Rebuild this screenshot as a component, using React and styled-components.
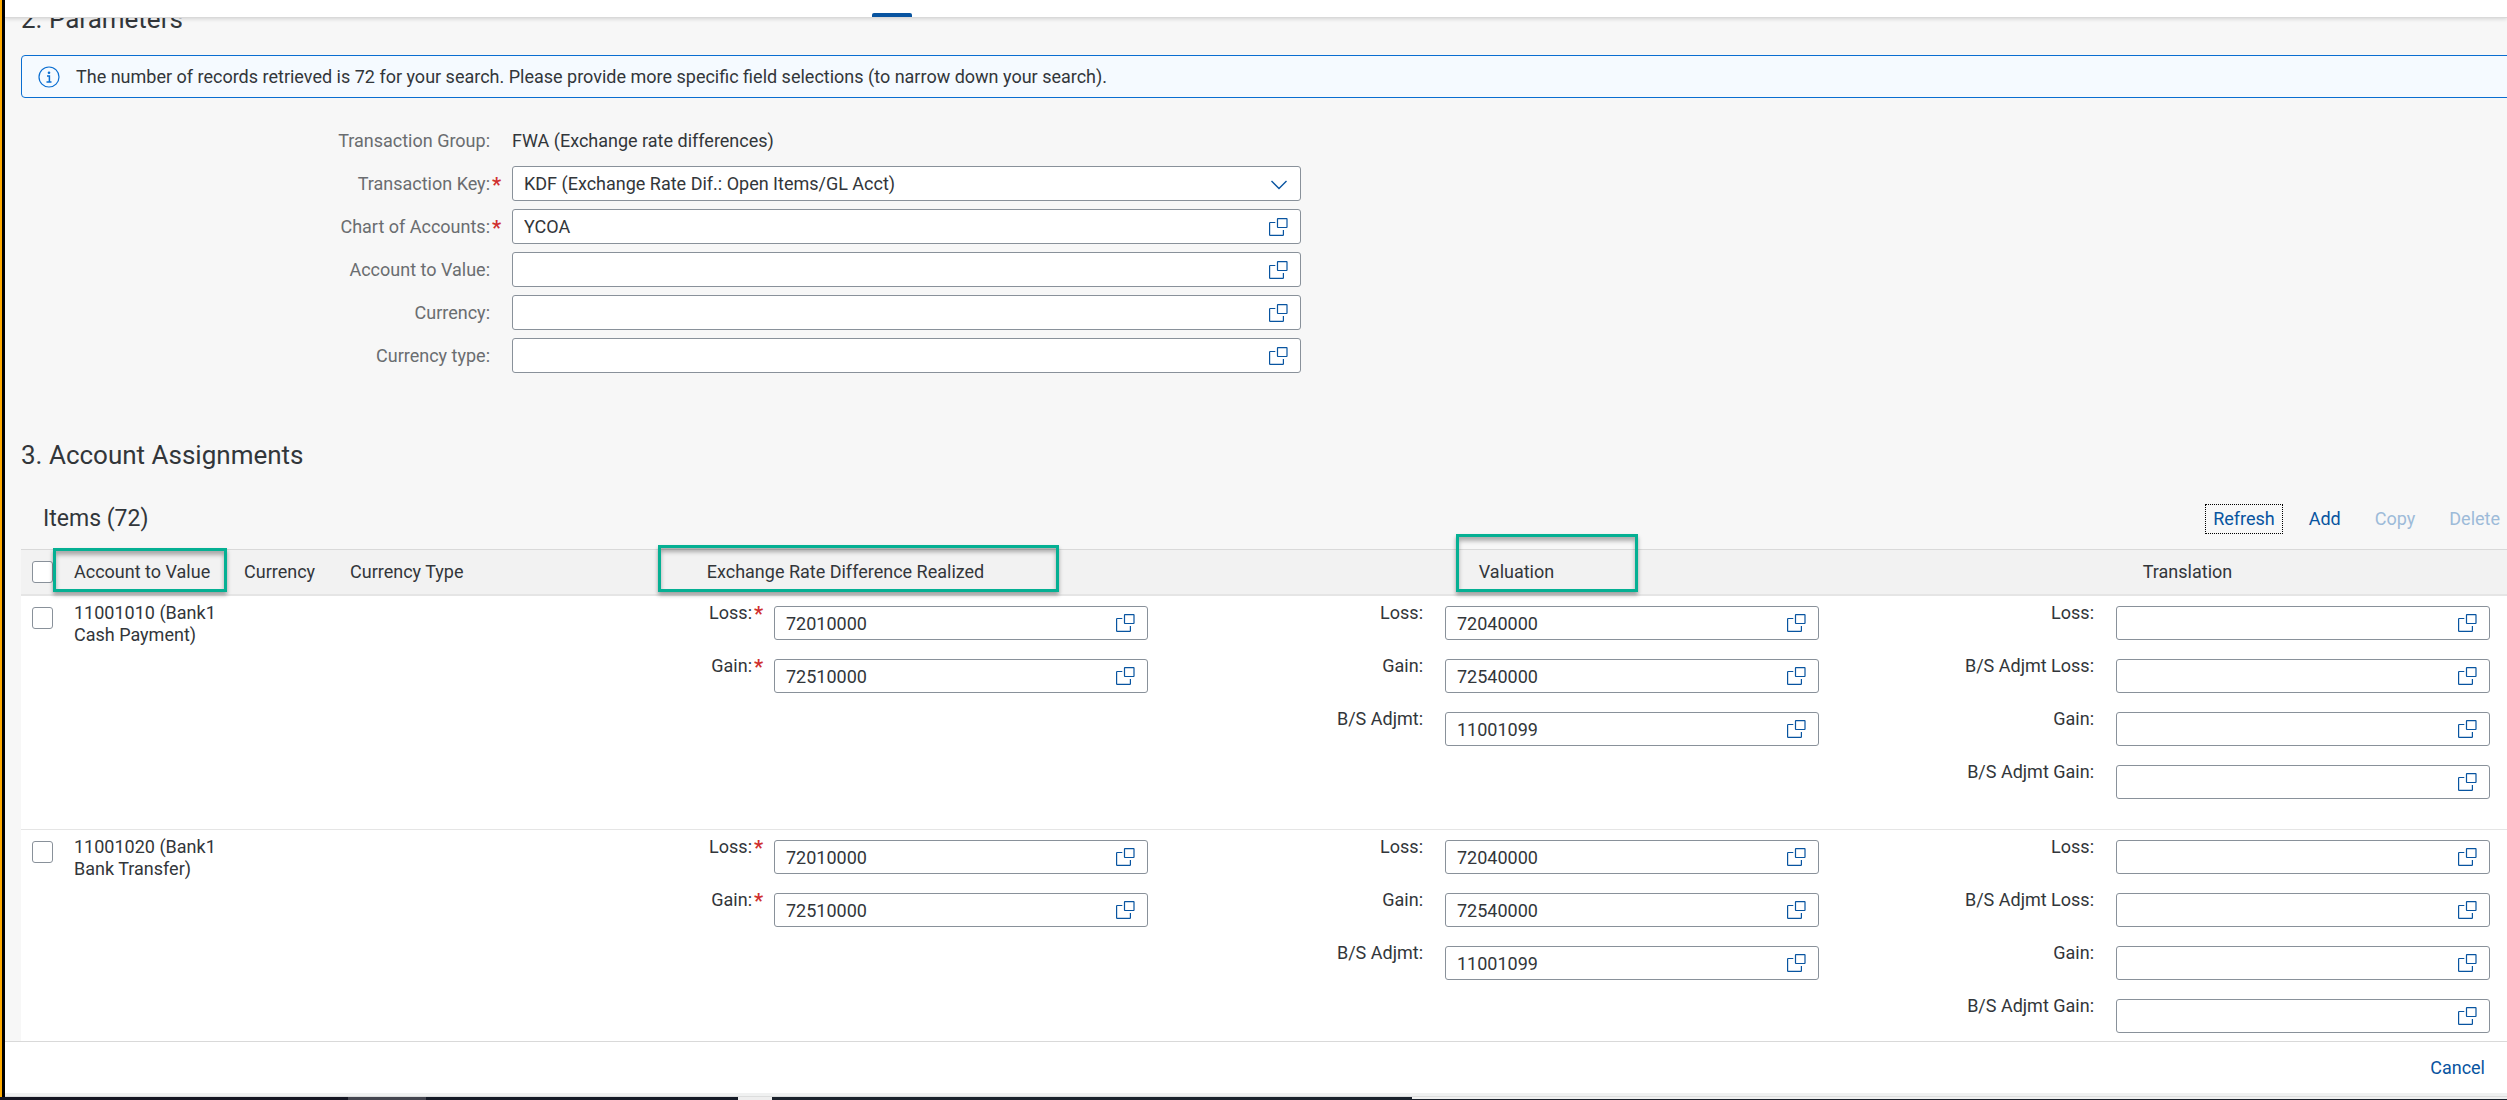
import React, { useId } from "react";
import styled, { createGlobalStyle } from "styled-components";

const color = {
  text: "#32363a",
  label: "#6a6d70",
  link: "#0854a0",
  border: "#89919a",
  line: "#d9d9d9",
  required: "#d0302f",
  mark: "#05b093",
};

const GlobalStyle = createGlobalStyle`
  *, *::before, *::after { box-sizing: border-box; }
  body { margin: 0; overflow: hidden; }
  body, button, input, select {
    font-family: Roboto, "Liberation Sans", sans-serif;
    font-size: 18px;
    line-height: 22px;
    color: ${color.text};
  }
`;

const Page = styled.div`
  display: flex;
  flex-direction: column;
  height: 100vh;
  overflow: hidden;
  background: #f7f7f7;
`;

const Window = styled.div`
  flex: 1;
  min-height: 0;
  display: flex;
  flex-direction: column;
  border-left: 3px solid #000;
  box-shadow: -2px 0 0 #ffab00;
  margin-left: 2px;
`;

const TabBar = styled.header`
  flex: none;
  display: flex;
  align-items: flex-end;
  height: 18px;
  padding-left: 867px;
  background: #fff;
  border-bottom: 1px solid ${color.line};
  box-shadow: 0 1px 4px rgba(0, 0, 0, 0.15);
  z-index: 1;
`;

const ActiveTab = styled.div`
  width: 40px;
  height: 4px;
  border-radius: 2px 2px 0 0;
  background: ${color.link};
`;

const Content = styled.main`
  flex: 1;
  min-height: 0;
  overflow: hidden;
`;

const Scrolled = styled.div`
  width: 100%;
  margin: -15px 0 0 16px;
`;

const SectionTitle = styled.h2`
  margin: 0;
  font-size: 26px;
  font-weight: 400;
  line-height: 32px;
`;

const MessageStrip = styled.div`
  display: flex;
  align-items: center;
  gap: 16px;
  height: 43px;
  margin-top: 20px;
  padding-left: 16px;
  border: 1px solid #0a6ed1;
  border-radius: 4px;
  background: #f5faff;
`;

const Form = styled.form`
  display: grid;
  grid-template-columns: 491fr 789fr 1222fr;
  grid-auto-rows: 35px;
  row-gap: 8px;
  margin: 25px 0 66px;
`;

const FormRow = styled.div`
  grid-column: 1 / 3;
  display: grid;
  grid-template-columns: subgrid;
  align-items: center;
`;

const Label = styled.label`
  display: flex;
  justify-content: flex-end;
  white-space: nowrap;
  color: ${(p) => (p.$muted ? color.label : color.text)};

  &::after {
    content: "${(p) => (p.$required ? "*" : "")}";
    width: 22px;
    padding: 3px 0 0 2px;
    font-size: 20px;
    font-weight: 700;
    line-height: 19px;
    color: ${color.required};
  }
`;

const Control = styled.div`
  display: flex;
  align-items: center;
  height: ${(p) => p.$height}px;
  padding-right: 12px;
  border: 1px solid ${color.border};
  border-radius: 3px;
  background: #fff;
`;

const TextInput = styled.input`
  flex: 1;
  min-width: 0;
  height: 100%;
  padding: 0 11px;
  border: 0;
  outline: 0;
  background: transparent;
`;

const KeySelect = styled.select`
  flex: 1;
  min-width: 0;
  height: 100%;
  padding: 0 11px;
  border: 0;
  outline: 0;
  appearance: none;
  background: transparent;
`;

const IconButton = styled.button`
  display: flex;
  padding: 0;
  border: 0;
  background: transparent;
  color: ${color.link};
`;

const Toolbar = styled.div`
  display: flex;
  align-items: center;
  height: 60px;
  margin-top: 18px;
  padding: 0 15px 0 22px;
`;

const TableTitle = styled.h3`
  flex: 1;
  margin: 0;
  font-size: 23px;
  font-weight: 400;
  line-height: 28px;
`;

const Actions = styled.div`
  display: flex;
  gap: 18px;
`;

const TextButton = styled.button`
  height: 30px;
  padding: 0 7px;
  border: 1px dotted ${(p) => (p.$focused ? "#000" : "transparent")};
  background: transparent;
  color: ${color.link};

  &:disabled {
    color: #9dbbd9;
  }
`;

const Table = styled.table`
  width: 100%;
  table-layout: fixed;
  border-collapse: separate;
  border-spacing: 0;
  border-top: 1px solid ${color.line};
  background: #fff;
`;

const HeadCell = styled.th`
  height: 46px;
  padding: 0;
  border-bottom: 2px solid #e5e5e5;
  background: #f2f2f2;
  font-weight: 400;
  text-align: ${(p) => (p.$center ? "center" : "left")};
`;

const Marked = styled.span`
  position: relative;
`;

const Mark = styled.span`
  position: absolute;
  top: ${(p) => p.$top}px;
  bottom: -10px;
  left: ${(p) => p.$left}px;
  right: ${(p) => p.$right}px;
  border: 3px solid ${color.mark};
  box-shadow: 0 3px 4px rgba(0, 0, 0, 0.35), inset 0 4px 4px rgba(0, 0, 0, 0.3);
`;

const Cell = styled.td`
  height: 234px;
  padding: 6px 0 0;
  border-bottom: 1px solid #e5e5e5;
  vertical-align: top;
`;

const Account = styled.div`
  width: 152px;
`;

const CheckBox = styled.input`
  display: block;
  appearance: none;
  width: 21px;
  height: 22px;
  margin: ${(p) => (p.$row ? 5 : 0)}px 0 0 11px;
  border: 1px solid ${color.border};
  border-radius: 3px;
  background: #fff;
`;

const Field = styled.div`
  display: grid;
  grid-template-columns: 264fr 374fr 33fr;
  height: 53px;

  & > div {
    margin-top: 4px;
  }
`;

const Footer = styled.footer`
  flex: none;
  display: flex;
  align-items: center;
  justify-content: flex-end;
  height: 52px;
  padding-right: 14px;
  border-top: 1px solid ${color.line};
  background: #fff;
`;

const WindowEdge = styled.div`
  flex: none;
  height: 4px;
  background: #f0f1f1;
  border-bottom: 1px solid #dcdddd;
`;

const TaskBar = styled.div`
  flex: none;
  display: flex;
  height: 3px;
`;

const TaskSegment = styled.div`
  flex: ${(p) => p.$grow} 0 0;
  background: ${(p) => p.$tone};
  border-bottom: ${(p) => (p.$edge ? "1px solid #1b222c" : "0")};
`;

const InfoIcon = () => (
  <svg width="22" height="22" viewBox="0 0 22 22" fill="none" aria-hidden="true">
    <circle cx="11" cy="11" r="10" stroke="#0a6ed1" strokeWidth="1.2" />
    <circle cx="11" cy="6.8" r="1.3" fill="#0a6ed1" />
    <path d="M9 9.900h2.400v6M8.500 16h5" stroke="#0a6ed1" strokeWidth="1.5" />
  </svg>
);

const ValueHelpIcon = () => (
  <svg width="19" height="18" viewBox="0 0 19 18" fill="none" stroke="currentColor" strokeWidth="1.2" aria-hidden="true">
    <rect x="8.5" y="0.6" width="9.5" height="8.9" rx="0.4" />
    <path d="M6.300 4.500H1.200a.6.6 0 0 0-.6.6v11.700c0 .3.300.6.6.6h12.600c.3 0 .6-.3.6-.6V12" />
  </svg>
);

const ChevronIcon = () => (
  <svg width="18" height="18" viewBox="0 0 18 18" fill="none" stroke={color.link} strokeWidth="1.4" aria-hidden="true">
    <path d="M1.500 6 9 13.500 16.500 6" />
  </svg>
);

function ValueHelpInput({ id, value = "", height }) {
  return (
    <Control $height={height}>
      <TextInput id={id} type="text" defaultValue={value} />
      <IconButton type="button" aria-label="Value help">
        <ValueHelpIcon />
      </IconButton>
    </Control>
  );
}

function FormField({ label, required, value }) {
  const id = useId();
  return (
    <FormRow>
      <Label htmlFor={id} $muted $required={required}>{label}</Label>
      <ValueHelpInput id={id} value={value} height={35} />
    </FormRow>
  );
}

function CellField({ label, required, value }) {
  const id = useId();
  return (
    <Field>
      <Label htmlFor={id} $required={required}>{label}</Label>
      <ValueHelpInput id={id} value={value} height={34} />
    </Field>
  );
}

const groups = [
  [
    { label: "Loss:", required: true, value: "72010000" },
    { label: "Gain:", required: true, value: "72510000" },
  ],
  [
    { label: "Loss:", value: "72040000" },
    { label: "Gain:", value: "72540000" },
    { label: "B/S Adjmt:", value: "11001099" },
  ],
  [
    { label: "Loss:" },
    { label: "B/S Adjmt Loss:" },
    { label: "Gain:" },
    { label: "B/S Adjmt Gain:" },
  ],
];

const accounts = ["11001010 (Bank1 Cash Payment)", "11001020 (Bank1 Bank Transfer)"];

const taskSegments = [
  { grow: 348, tone: "#151622" },
  { grow: 78, tone: "#44454f" },
  { grow: 312, tone: "#151a26" },
  { grow: 34, tone: "#eeeeee" },
  { grow: 640, tone: "#1b222c" },
  { grow: 1095, tone: "#f0f0f0", edge: true },
];

export default function App() {
  return (
    <Page>
      <GlobalStyle />
      <Window>
        <TabBar>
          <ActiveTab />
        </TabBar>
        <Content>
          <Scrolled>
            <SectionTitle>2. Parameters</SectionTitle>
            <MessageStrip role="status">
              <InfoIcon />
              <span>
                The number of records retrieved is 72 for your search. Please provide more specific field selections (to
                narrow down your search).
              </span>
            </MessageStrip>
            <Form>
              <FormRow>
                <Label as="span" $muted>Transaction Group:</Label>
                <span>FWA (Exchange rate differences)</span>
              </FormRow>
              <FormRow>
                <Label htmlFor="transaction-key" $muted $required>Transaction Key:</Label>
                <Control $height={35}>
                  <KeySelect id="transaction-key">
                    <option>KDF (Exchange Rate Dif.: Open Items/GL Acct)</option>
                  </KeySelect>
                  <ChevronIcon />
                </Control>
              </FormRow>
              <FormField label="Chart of Accounts:" required value="YCOA" />
              <FormField label="Account to Value:" />
              <FormField label="Currency:" />
              <FormField label="Currency type:" />
            </Form>
            <SectionTitle>3. Account Assignments</SectionTitle>
            <Toolbar>
              <TableTitle>Items (72)</TableTitle>
              <Actions>
                <TextButton type="button" $focused>Refresh</TextButton>
                <TextButton type="button">Add</TextButton>
                <TextButton type="button" disabled>Copy</TextButton>
                <TextButton type="button" disabled>Delete</TextButton>
              </Actions>
            </Toolbar>
            <Table>
              <colgroup>
                <col style={{ width: 53 }} />
                <col style={{ width: 170 }} />
                <col style={{ width: 106 }} />
                <col style={{ width: 160 }} />
                <col />
                <col />
                <col />
              </colgroup>
              <thead>
                <tr>
                  <HeadCell>
                    <CheckBox type="checkbox" aria-label="Select all items" />
                  </HeadCell>
                  <HeadCell>
                    <Marked>
                      Account to Value
                      <Mark $top={-13} $left={-21} $right={-17} />
                    </Marked>
                  </HeadCell>
                  <HeadCell>Currency</HeadCell>
                  <HeadCell>Currency Type</HeadCell>
                  <HeadCell $center>
                    <Marked>
                      Exchange Rate Difference Realized
                      <Mark $top={-16} $left={-49} $right={-75} />
                    </Marked>
                  </HeadCell>
                  <HeadCell $center>
                    <Marked>
                      Valuation
                      <Mark $top={-27} $left={-23} $right={-84} />
                    </Marked>
                  </HeadCell>
                  <HeadCell $center>Translation</HeadCell>
                </tr>
              </thead>
              <tbody>
                {accounts.map((account) => (
                  <tr key={account}>
                    <Cell>
                      <CheckBox type="checkbox" $row aria-label={`Select ${account}`} />
                    </Cell>
                    <Cell>
                      <Account>{account}</Account>
                    </Cell>
                    <Cell />
                    <Cell />
                    {groups.map((fields, i) => (
                      <Cell key={i}>
                        {fields.map((field) => (
                          <CellField key={field.label} {...field} />
                        ))}
                      </Cell>
                    ))}
                  </tr>
                ))}
              </tbody>
            </Table>
          </Scrolled>
        </Content>
        <Footer>
          <TextButton type="button">Cancel</TextButton>
        </Footer>
        <WindowEdge />
      </Window>
      <TaskBar>
        {taskSegments.map(({ grow, tone, edge }) => (
          <TaskSegment key={grow} $grow={grow} $tone={tone} $edge={edge} />
        ))}
      </TaskBar>
    </Page>
  );
}
